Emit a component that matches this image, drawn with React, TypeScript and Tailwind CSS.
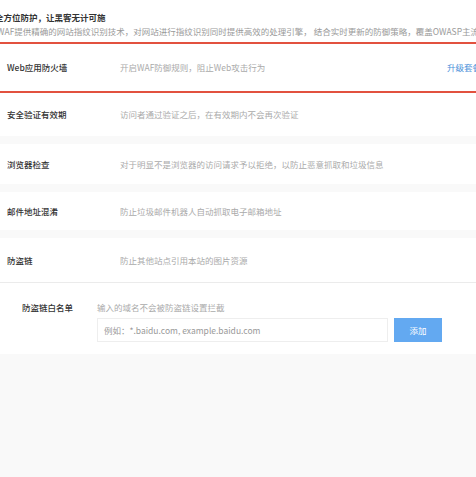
import React from "react";

const font = { fontFamily: '"Noto Sans CJK SC", "Noto Sans", sans-serif' };

function Row({ label, desc, h, extra }: { label: string; desc: string; h: string; extra?: React.ReactNode }) {
  return (
    <div className={`flex items-center bg-white ${h} text-[8.5px]`}>
      <div className="w-[120px] pl-[7px] text-[#333] font-medium">{label}</div>
      <div className="flex-1 text-[#aaa]">{desc}</div>
      {extra}
    </div>
  );
}

export default function App() {
  return (
    <div className="w-[476px] h-[477px] bg-[#f9f9f9] overflow-hidden" style={font}>
      <div className="bg-white h-[42px] flex flex-col pt-[11px] whitespace-nowrap">
        <div className="text-[8.5px] text-[#333] font-bold ml-[-5px] leading-[12px]">全方位防护，让黑客无计可施</div>
        <div className="text-[8.5px] text-[#999] ml-[-3px] mt-[2px] leading-[12px]">
          WAF提供精确的网站指纹识别技术，对网站进行指纹识别同时提供高效的处理引擎， 结合实时更新的防御策略，覆盖OWASP主流的安全威胁
        </div>
      </div>
      <div className="h-[2px] bg-[#e2513f]" />
      <Row
        label="Web应用防火墙"
        desc="开启WAF防御规则，阻止Web攻击行为"
        h="h-[47px]"
        extra={<div className="text-[#4a90d9] whitespace-nowrap w-[29px] overflow-hidden">升级套餐</div>}
      />
      <div className="h-[2px] bg-[#e2513f]" />
      <div className="flex flex-col gap-[8px]">
        <Row label="安全验证有效期" desc="访问者通过验证之后，在有效期内不会再次验证" h="h-[43px]" />
        <Row label="浏览器检查" desc="对于明显不是浏览器的访问请求予以拒绝，以防止恶意抓取和垃圾信息" h="h-[40px]" />
        <Row label="邮件地址混淆" desc="防止垃圾邮件机器人自动抓取电子邮箱地址" h="h-[38px]" />
        <div>
          <Row label="防盗链" desc="防止其他站点引用本站的图片资源" h="h-[44px]" />
          <div className="h-px bg-[#ebebeb]" />
          <div className="bg-white h-[71px] pt-[18px] text-[8.5px]">
            <div className="flex items-center leading-[12px]">
              <div className="w-[97px] pl-[22px] text-[#333] font-medium">防盗链白名单</div>
              <div className="text-[#aaa]">输入的域名不会被防盗链设置拦截</div>
            </div>
            <div className="flex ml-[97px] mt-[5px] gap-[6px]">
              <div className="w-[291px] h-[24px] border border-[#eee] flex items-center pl-[6px] text-[#999]">
                例如：*.baidu.com, example.baidu.com
              </div>
              <button className="w-[48px] h-[24px] bg-[#63a9f1] text-white text-[8.5px]">添加</button>
            </div>
          </div>
        </div>
      </div>
    </div>
  );
}
